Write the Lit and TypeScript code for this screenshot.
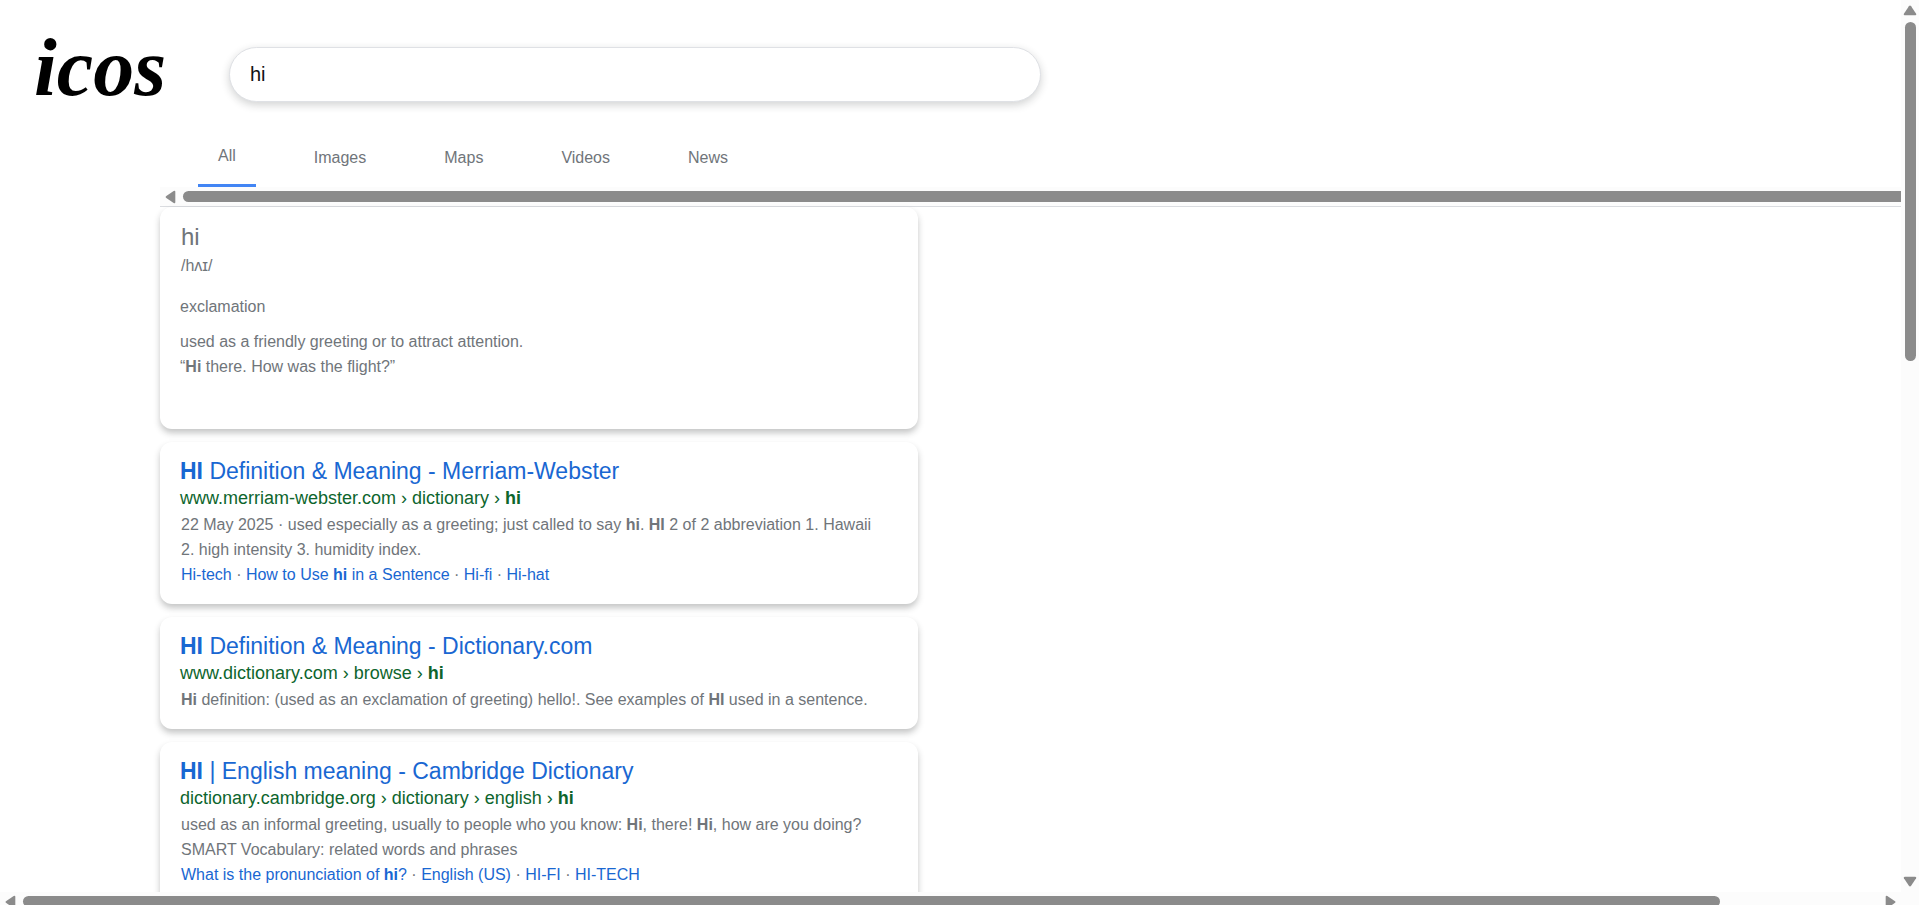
import { LitElement, html, css, svg } from "lit";
import { customElement, property } from "lit/decorators.js";

type Result = { title: unknown; url: unknown; body: unknown; links?: unknown[] };

const RESULTS: Result[] = [
  {
    title: html`<b>HI</b> Definition &amp; Meaning - Merriam-Webster`,
    url: html`www.merriam-webster.com › dictionary › <b>hi</b>`,
    body: html`22 May 2025 · used especially as a greeting; just called to say <b>hi</b>. <b>HI</b> 2 of 2 abbreviation 1. Hawaii 2. high intensity 3. humidity index.`,
    links: ["Hi-tech", html`How to Use <b>hi</b> in a Sentence`, "Hi-fi", "Hi-hat"],
  },
  {
    title: html`<b>HI</b> Definition &amp; Meaning - Dictionary.com`,
    url: html`www.dictionary.com › browse › <b>hi</b>`,
    body: html`<b>Hi</b> definition: (used as an exclamation of greeting) hello!. See examples of <b>HI</b> used in a sentence.`,
  },
  {
    title: html`<b>HI</b> | English meaning - Cambridge Dictionary`,
    url: html`dictionary.cambridge.org › dictionary › english › <b>hi</b>`,
    body: html`used as an informal greeting, usually to people who you know: <b>Hi</b>, there! <b>Hi</b>, how are you doing? SMART Vocabulary: related words and phrases`,
    links: [html`What is the pronunciation of <b>hi</b>?`, "English (US)", "HI-FI", "HI-TECH"],
  },
];

const arrow = (turn: number) => svg`<svg class="arrow" viewBox="0 0 18 18" width="18" height="18" aria-hidden="true">
  <path transform="rotate(${turn} 9 9)" d="M2.9 12.700 L7.900 5.300 Q9 3.700 10.100 5.300 L15.100 12.700 Q15.800 14.300 14.200 14.300 H3.800 Q2.200 14.300 2.900 12.700 Z" fill="#8b8b8b"/>
</svg>`;

@customElement("scroll-track")
class ScrollTrack extends LitElement {
  @property() axis = "x";
  @property({ type: Number }) share = 100;
  @property({ type: Boolean }) open = false;

  static styles = css`
    :host { display: block; background: #fcfcfc; overflow: hidden; }
    .bar { display: flex; align-items: center; height: 19px; padding: 0 1px; box-sizing: border-box; }
    .bar.y { flex-direction: column; width: 18px; height: 100%; padding: 1px 0; }
    .bar.open { padding-right: 0; }
    .arrow { display: block; flex: none; }
    .rail { flex: 1; height: 11px; margin: 0 4px; }
    .bar.y .rail { width: 11px; height: auto; margin: 3px 0; }
    .bar.open .rail { margin-right: 0; }
    .thumb { height: 100%; background: #8b8b8b; border-radius: 6px; }
    .bar.open .thumb { border-radius: 6px 0 0 6px; }
  `;

  render() {
    const y = this.axis === "y";
    return html`<div class="bar ${y ? "y" : "x"} ${this.open ? "open" : ""}">
      ${arrow(y ? 0 : -90)}
      <div class="rail"><div class="thumb" style="${y ? "height" : "width"}:${this.share}%"></div></div>
      ${this.open ? "" : arrow(y ? 180 : 90)}
    </div>`;
  }
}

@customElement("app-root")
class AppRoot extends LitElement {
  static styles = css`
    :host {
      display: grid;
      grid-template-columns: minmax(0, 1fr) 18px;
      grid-template-rows: minmax(0, 1fr) 13px;
      height: 100vh;
      background: #fff;
      color: #70757a;
      font: 16px/25px "Liberation Sans", Arial, sans-serif;
    }
    .page { overflow: hidden; }
    .across { grid-column: 1; }
    .down { grid-column: 2; grid-row: 1; }
    .corner { background: #fcfcfc; }
    a { color: #1967d2; text-decoration: none; }
    header { display: flex; align-items: center; min-height: 76px; padding-top: 36px; }
    .logo {
      align-self: flex-start; width: 229px; padding-left: 34px; box-sizing: border-box;
      color: #000; font: italic bold 82px/64px "Liberation Serif", serif;
    }
    .search {
      flex: 0 1 812px; min-width: 0; height: 55px; padding: 0 20px; box-sizing: border-box;
      border: 1px solid #dfe1e5; border-radius: 28px; outline: 0; background: #fff; color: #111;
      box-shadow: 0 3px 8px rgba(32, 33, 36, 0.2);
      font: 20px "Liberation Sans", Arial, sans-serif;
    }
    .content { margin-left: 160px; }
    .tabs { display: flex; gap: 38px; padding: 22px 38px 0; line-height: 24px; }
    .tab { padding: 12px 20px 14px; color: #70757a; }
    .tab.current { padding: 10px 20px 16px; border-bottom: 3px solid #4285f4; }
    .rule { border-bottom: 1px solid #dadce0; }
    .results { display: flex; flex-direction: column; gap: 13px; max-width: 758px; }
    .card {
      padding: 16px 20px 17px; border-radius: 12px; background: #fff;
      box-shadow: 0 4px 6px rgba(32, 33, 36, 0.26);
    }
    .card p, .card h2, .card h3 { margin: 0; font-weight: 400; }
    .card h2 { font-size: 24px; line-height: 28px; padding-bottom: 2px; }
    .card h3 { font-size: 23px; line-height: 26px; }
    .word { min-height: 189px; }
    .kind { padding: 16px 0 10px; }
    .card .kind { padding: 16px 0 10px; }
    .url { color: #0d652d; font-size: 18px; line-height: 28px; }
    .indent { padding: 0 12px 0 1px; }
  `;

  render() {
    return html`
      <div class="page">
        <header>
          <div class="logo">icos</div>
          <input class="search" type="text" aria-label="Search" value="hi" />
        </header>
        <main class="content">
          <nav class="tabs">
            ${["All", "Images", "Maps", "Videos", "News"].map(
              (t, i) => html`<a class="tab ${i ? "" : "current"}" href="#">${t}</a>`
            )}
          </nav>
          <scroll-track class="rule" open></scroll-track>
          <div class="results">
            <section class="card word">
              <h2 class="indent">hi</h2>
              <p class="indent">/hʌɪ/</p>
              <p class="kind">exclamation</p>
              <p>used as a friendly greeting or to attract attention.</p>
              <p>“<b>Hi</b> there. How was the flight?”</p>
            </section>
            ${RESULTS.map(
              (r) => html`<article class="card">
                <h3><a href="#">${r.title}</a></h3>
                <p class="url">${r.url}</p>
                <p class="indent">${r.body}</p>
                ${r.links
                  ? html`<p class="indent">${r.links.map((l, i) => html`${i ? " · " : ""}<a href="#">${l}</a>`)}</p>`
                  : ""}
              </article>`
            )}
          </div>
        </main>
      </div>
      <scroll-track class="down" axis="y" share="40"></scroll-track>
      <scroll-track class="across" share="91.5"></scroll-track>
      <div class="corner"></div>
    `;
  }
}
